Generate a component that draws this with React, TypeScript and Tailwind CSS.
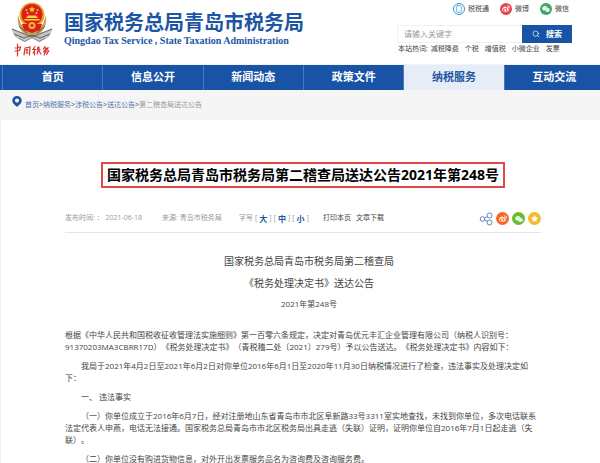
import React from 'react';
import { FaWeibo, FaWeixin, FaStar } from 'react-icons/fa';
import { Search, Smartphone } from 'lucide-react';

const NAV = ['首页', '信息公开', '新闻动态', '政策文件', '纳税服务', '互动交流'];
const ACTIVE = '纳税服务';
const HOT_WORDS = ['减税降费', '个税', '增值税', '小微企业', '发票'];
const CRUMBS = ['首页', '纳税服务', '涉税公告', '送达公告'];

// 税徽 + 手写体 “中国税务”
function Emblem() {
    return (
        <svg viewBox="0 0 44 58" className="h-[58px] w-11 shrink-0" aria-label="中国税务">
            <path d="M8 15 C7 26 10 34 22 37 C34 34 37 26 36 15 L33 24 L28 30 L16 30 L11 24 Z" fill="#c9a15a" />
            <path d="M1.500 29 L10 32 L22 36 L34 32 L42.500 29 L39 37 L30 42 L22 38 L14 42 L5 37 Z" fill="#c4c4c4" />
            <path d="M2 29 L12 33 L22 37 L32 33 L42 29 M4 34 L14 38 L22 35 L30 38 L40 34 M9 26 L17 33 M35 26 L27 33" stroke="#555" strokeWidth="0.900" fill="none" />
            <path d="M9 38 L15 41.500 L22 37.500 L29 41.500 L35 38" stroke="#8a8a8a" strokeWidth="1" fill="none" />
            <circle cx="22" cy="15" r="12.500" fill="#e9a825" />
            <circle cx="22" cy="14.500" r="10.600" fill="#dc1f1b" />
            <path d="M22 6 L22.900 8.300 L25.400 8.400 L23.400 9.900 L24.100 12.300 L22 10.900 L19.900 12.300 L20.600 9.900 L18.600 8.400 L21.100 8.300 Z" fill="#fbd43c" />
            <g fill="#fbd43c">
                <circle cx="16.500" cy="10" r="0.900" />
                <circle cx="27.500" cy="10" r="0.900" />
                <circle cx="17.500" cy="13" r="0.900" />
                <circle cx="26.500" cy="13" r="0.900" />
                <path d="M16 18 L18 15.500 H26 L28 18 Z" />
                <path d="M14.500 19 H29.500 V20.500 H14.500 Z" />
            </g>
            <path d="M12 24 H32 L30 30 L22 33 L14 30 Z" fill="#dc1f1b" />
            <circle cx="22" cy="25.500" r="3.500" fill="#f0b92d" />
            <circle cx="22" cy="25.500" r="1.500" fill="#dc1f1b" />
            <g stroke="#d8342c" strokeWidth="1.200" fill="none" strokeLinecap="round">
                <path d="M7.500 44 V56 M5 48 L10.500 47 L9.500 50.500 L5 51" />
                <path d="M15 48 L14 55 M15 48 L20 47 L19.500 55 M16 50 H18 M17 49 V53 M16 53 H18" />
                <path d="M25 46.500 L23.500 48.500 M22.500 49.500 H26 M24.500 49 V55 M24.500 51 L23 53 M28 47 L27.500 49 M27.500 50 H30 M29 47 V50 M28 51 L27 54 M29 51 L31 54" />
                <path d="M35 46.500 L33.500 49 M34 48 H38 L34 51 M35.500 49 L39 51 M33.500 52 H38 L36.500 54.500 M36 51 L34 55" />
            </g>
        </svg>
    );
}

function ShareIcon() {
    return (
        <svg viewBox="0 0 14 14" className="size-3.5" fill="none" stroke="#5d86bd" strokeWidth="1">
            <circle cx="3.500" cy="7" r="2.300" />
            <circle cx="10.500" cy="3.500" r="2.500" />
            <circle cx="10.500" cy="10.500" r="2.500" />
            <path d="M5.600 6 L8.200 4.600 M5.600 8 L8.200 9.400" />
        </svg>
    );
}

function PinIcon() {
    return (
        <svg viewBox="0 0 10 11" className="h-[11px] w-2.5">
            <path d="M5 0 A4.700 4.700 0 0 1 9.700 4.600 C9.700 7.500 6.500 9.500 5 11 C3.500 9.500 0.300 7.500 0.300 4.600 A4.700 4.700 0 0 1 5 0 Z" fill="#1b52a0" />
            <circle cx="5" cy="4.600" r="2.100" fill="#f5f5f5" />
        </svg>
    );
}

function SiteHeader() {
    return (
        <header className="flex h-[65px] justify-between border-b border-[#eef3fa] pl-[10px] pr-[28px]">
            <div className="flex items-start">
                <Emblem />
                <div className="ml-[10px] mt-[11px] whitespace-nowrap text-[#1d55a5]">
                    <div className="text-[20px] font-bold leading-6">国家税务总局青岛市税务局</div>
                    <div className="font-['Liberation_Serif',serif] text-[10px] font-bold leading-3">
                        Qingdao Tax Service , State Taxation Administration
                    </div>
                </div>
            </div>
            <div className="w-[175px] shrink-0">
                <div className="flex h-[15px] items-end justify-end gap-[11px] pr-[3px] text-[7px] leading-3">
                    <a href="#" className="flex items-center gap-[3px]">
                        <span className="flex size-3 items-center justify-center rounded-full border border-[#2f9bd0] text-[#2f9bd0]">
                            <Smartphone size={8} />
                        </span>
                        税税通
                    </a>
                    <a href="#" className="flex items-center gap-[3px]">
                        <span className="flex size-3 items-center justify-center rounded-full bg-[#e6454f] text-white">
                            <FaWeibo size={8} />
                        </span>
                        微博
                    </a>
                    <a href="#" className="flex items-center gap-[3px]">
                        <span className="flex size-3 items-center justify-center rounded-full bg-[#3fa866] text-white">
                            <FaWeixin size={8} />
                        </span>
                        微信
                    </a>
                </div>
                <form className="mt-2.5 flex h-[18px]" onSubmit={(e) => e.preventDefault()}>
                    <input
                        aria-label="关键字"
                        placeholder="请输入关键字"
                        className="min-w-0 flex-1 border border-r-0 border-[#f0f0f0] px-1.5 text-[8px] outline-none placeholder:text-[#999]"
                    />
                    <button className="flex w-[50px] items-center justify-center gap-1.5 bg-[#1853a5] text-[8px] font-bold text-white">
                        <Search size={8} />
                        搜索
                    </button>
                </form>
                <div className="flex gap-1.5 whitespace-nowrap pl-px text-[7px] leading-3">
                    <span className="flex gap-[3px]">
                        本站热词:
                        <a href="#">{HOT_WORDS[0]}</a>
                    </span>
                    {HOT_WORDS.slice(1).map((w) => (
                        <a key={w} href="#">{w}</a>
                    ))}
                </div>
            </div>
        </header>
    );
}

function MetaBar() {
    return (
        <div className="flex h-7 items-center whitespace-nowrap border-b border-[#e4e4e4] text-[7px] text-[#999]">
            <span className="w-[97px]">发布时间: ： 2021-06-18</span>
            <span className="w-[77px]">来源: 青岛市税务局</span>
            <span className="flex w-[84px] items-center">
                字号
                {['大', '中', '小'].map((s) => (
                    <React.Fragment key={s}>
                        <span className="ml-0.5">[</span>
                        <button className="mx-0.5 text-[8px] font-bold text-[#1d55a5]">{s}</button>
                        <span>]</span>
                    </React.Fragment>
                ))}
            </span>
            <span className="flex gap-[5px] text-[#444]">
                <button>打印本页</button>
                <button>文章下载</button>
            </span>
            <span className="ml-auto flex items-center gap-[3px]">
                <ShareIcon />
                <a href="#" aria-label="微博" className="flex size-[13px] items-center justify-center rounded-full bg-[#f2682c] text-white"><FaWeibo size={8} /></a>
                <a href="#" aria-label="微信" className="flex size-[13px] items-center justify-center rounded-full bg-[#65bd31] text-white"><FaWeixin size={8} /></a>
                <a href="#" aria-label="收藏" className="flex size-[13px] items-center justify-center rounded-full bg-[#f5b92e] text-white"><FaStar size={7} /></a>
            </span>
        </div>
    );
}

export default function App() {
    return (
        <div className="overflow-x-hidden bg-white font-['Open_Sans','Noto_Sans_CJK_SC',sans-serif] text-[#444] [text-spacing-trim:space-all]">
            <SiteHeader />
            <nav className="-mr-1 grid h-[25px] grid-cols-6 bg-[#1853a5] pl-0.5">
                {NAV.map((n) => (
                    <a
                        key={n}
                        href="#"
                        className={`flex items-center justify-center border-l border-[#4a79bb] text-[11px] font-bold ${n === ACTIVE ? 'bg-[#e6edf7] text-[#1d55a5]' : 'text-white'}`}
                    >
                        {n}
                    </a>
                ))}
            </nav>
            <div className="flex h-[30px] items-start gap-[3px] bg-[#f5f5f5] px-3 pt-1.5 text-[7px] leading-[18px] text-[#4f76ad]">
                <PinIcon />
                <div>
                    {CRUMBS.map((c) => (
                        <React.Fragment key={c}>
                            <a href="#">{c}</a>
                            <span className="text-[#444]">&gt;</span>
                        </React.Fragment>
                    ))}
                    <span className="text-[#999]">第二稽查局送达公告</span>
                </div>
            </div>
            <main className="border-l border-[#f0f0f0] pl-16 pr-[59px] pt-[42px]">
                <div className="flex justify-center">
                    <h1 className="whitespace-nowrap border-2 border-[#e04848] px-1 text-[14px] font-bold leading-[22px] text-black">
                        国家税务总局青岛市税务局第二稽查局送达公告2021年第248号
                    </h1>
                </div>
                <div className="mt-[17px]">
                    <MetaBar />
                </div>
                <article className="pt-[17px] text-[8px] leading-3">
                    <div className="indent-3 text-center">
                        <p className="text-[10px] leading-[22px]">国家税务总局青岛市税务局第二稽查局</p>
                        <p className="text-[10px] leading-[22px]">《税务处理决定书》送达公告</p>
                        <p className="leading-5">2021年第248号</p>
                    </div>
                    <div className="mt-[15px] space-y-[7px]">
                        <p>
                            根据《中华人民共和国税收征收管理法实施细则》第一百零六条规定，决定对青岛优元丰汇企业管理有限公司（纳税人识别号：91370203MA3CBRR17D）《税务处理决定书》（青税稽二处〔2021〕279号）予以公告送达。《税务处理决定书》内容如下：
                        </p>
                        <p className="indent-4">
                            我局于2021年4月2日至2021年6月2日对你单位2016年6月1日至2020年11月30日纳税情况进行了检查，违法事实及处理决定如下：
                        </p>
                        <p className="indent-4">一、 违法事实</p>
                        <p className="indent-4">
                            （一）你单位成立于2016年6月7日，经对注册地山东省青岛市市北区阜新路33号3311室实地查找，未找到你单位，多次电话联系法定代表人申燕，电话无法接通。国家税务总局青岛市市北区税务局出具走逃（失联）证明，证明你单位自2016年7月1日起走逃（失联）。
                        </p>
                        <p className="indent-4">（二）你单位没有购进货物信息，对外开出发票服务品名为咨询费及咨询服务费。</p>
                    </div>
                </article>
            </main>
        </div>
    );
}
